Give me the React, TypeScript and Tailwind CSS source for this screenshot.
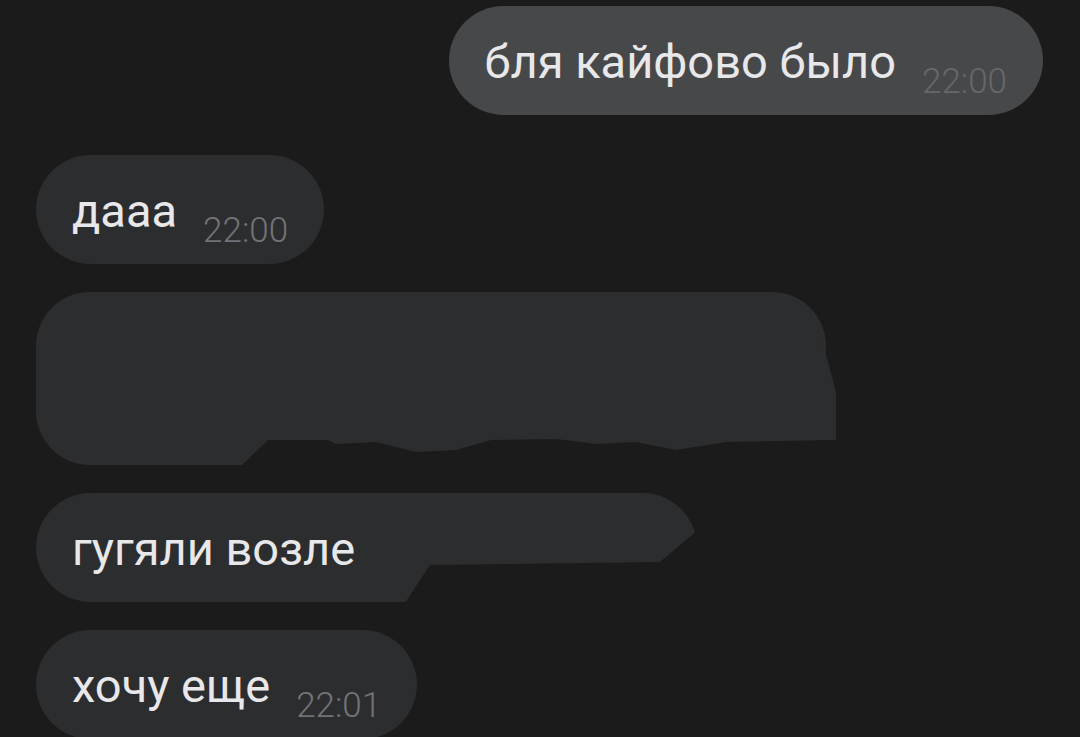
const BG = "#1b1b1c";

type BubbleProps = {
  text?: string;
  time?: string;
  mine?: boolean;
  className?: string;
  children?: React.ReactNode;
};

const Bubble: React.FC<BubbleProps> = ({ text, time, mine, className, children }) => {
  return (
    <div
      className={`relative h-[109px] shrink-0 rounded-full px-9 pt-[32px] whitespace-nowrap ${
        mine ? "self-end mr-[37px] bg-[#47484a]" : "self-start ml-[36px] bg-[#2c2d2f]"
      } ${className ?? ""}`}
    >
      {text && (
        <span className="text-[47px] leading-[47px] text-[#e8e8ea]">{text}</span>
      )}
      {time && (
        <span
          className={`ml-[26px] inline-block align-[-15px] text-[35px] leading-[35px] font-light ${
            mine ? "text-[#66676a]" : "text-[#727376]"
          }`}
        >
          {time}
        </span>
      )}
      {children}
    </div>
  );
};

export default function App() {
  return (
    <div
      className="flex h-[737px] w-full flex-col overflow-hidden pt-[6px]"
      style={{ background: BG, fontFamily: "Roboto, 'Noto Sans', sans-serif" }}
    >
      <Bubble mine text="бля кайфово было" time="22:00" />
      <Bubble text="дааа" time="22:00" className="mt-[40px]" />

      {/* redacted message */}
      <div className="relative mt-[28px] ml-[36px] h-[173px] w-[790px] shrink-0 self-start rounded-[54px] bg-[#2c2d2f]">
        <svg
          className="absolute left-0 top-0"
          width="800"
          height="174"
          viewBox="0 0 800 174"
        >
          <polygon points="760,14 784,40 800,100 800,148 760,148" fill="#2c2d2f" />
          <polygon
            points="205,174 232,148 292,148 300,152 340,150 380,160 420,158 455,148 520,147 560,152 600,150 640,158 690,150 800,148 800,174"
            fill={BG}
          />
        </svg>
      </div>

      <Bubble text="гугяли возле" className="mt-[28px] w-[661px]">
        <svg
          className="absolute left-0 top-0"
          width="661"
          height="109"
          viewBox="0 0 661 109"
        >
          <polygon points="369,110 394,72 624,69 662,37 662,110" fill={BG} />
        </svg>
      </Bubble>

      <Bubble text="хочу еще" time="22:01" className="mt-[28px]" />
    </div>
  );
}
